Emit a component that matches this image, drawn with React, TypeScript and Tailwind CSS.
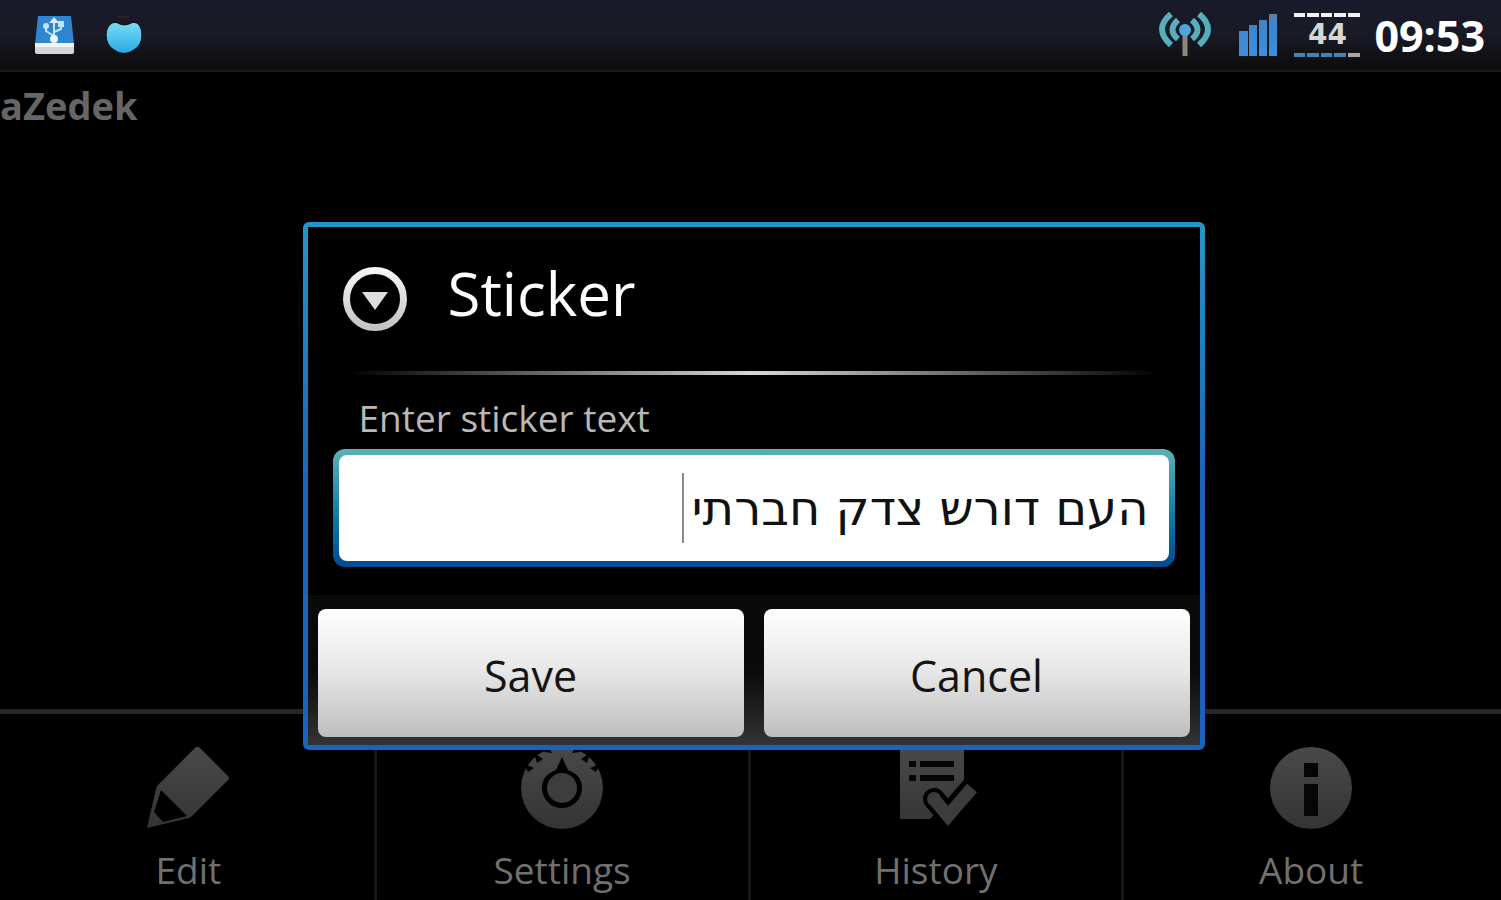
import type { ReactNode } from 'react';

function UsbDriveIcon() {
  return (
    <svg width="42" height="42" viewBox="0 0 42 42" aria-hidden="true">
      <path d="M4 2h33l3 28H1z" fill="#2f86cf" />
      <path d="M1 29h39v9q0 2-2 2H3q-2 0-2-2z" fill="#d6d6d6" />
      <path d="M1 29h39v4H1z" fill="#f4f4f4" />
      <g stroke="#c4e2fa" strokeWidth="2" fill="none">
        <path d="M20 6v20M20 22l-8-5v-5M20 18l7-3v-5" />
      </g>
      <path d="M20 3l5 6H15z" fill="#d8ecff" />
      <circle cx="20" cy="25" r="4" fill="#e8f6ff" />
      <circle cx="12" cy="12" r="3" fill="#c4e2fa" />
      <path d="M24 7h6v6h-6z" fill="#c4e2fa" />
    </svg>
  );
}

function FruitIcon() {
  return (
    <svg width="40" height="42" viewBox="0 0 40 42" aria-hidden="true">
      <defs>
        <linearGradient id="fruit" x1="0" y1="0" x2="0" y2="1">
          <stop offset="0" stopColor="#7adcf6" />
          <stop offset="1" stopColor="#25a9e0" />
        </linearGradient>
      </defs>
      <path d="M14 2q6 3 11 0" stroke="#33262a" strokeWidth="2" fill="none" />
      <path
        d="M8 9q4-2 8 1q4 2 9 0q4-3 8-1q5 4 5 12q0 10-8 15q-10 7-20 0q-8-5-8-15q0-8 6-12z"
        fill="url(#fruit)"
        stroke="#05080c"
        strokeWidth="1"
      />
    </svg>
  );
}

function AntennaIcon() {
  return (
    <svg width="54" height="46" viewBox="0 0 54 46" fill="none" aria-hidden="true">
      <g stroke="#57aebd" strokeWidth="6">
        <path d="M13 2q-18 15 0 31M41 2q18 15 0 31" />
        <path d="M20 8q-11 10 0 19M34 8q11 10 0 19" />
      </g>
      <path d="M27 20v24" stroke="#8a8680" strokeWidth="5" />
      <circle cx="27" cy="18" r="6" fill="#4aa8e0" />
    </svg>
  );
}

function SignalIcon() {
  return (
    <svg width="40" height="44" viewBox="0 0 40 44" aria-hidden="true">
      <defs>
        <linearGradient id="signal" x1="0" y1="0" x2="0" y2="44" gradientUnits="userSpaceOnUse">
          <stop offset="0" stopColor="#5f7f9c" />
          <stop offset="0.300" stopColor="#3b86d0" />
          <stop offset="1" stopColor="#3d8fe0" />
        </linearGradient>
      </defs>
      <path d="M1 18h9v25H1zM11 12h8v31h-8zM21 7h8v36h-8zM31 1h8v42h-8z" fill="url(#signal)" />
    </svg>
  );
}

function DashedLine({ color, last }: { color: string; last: string }) {
  return (
    <svg width="66" height="4" viewBox="0 0 66 4" aria-hidden="true">
      <path d="M0 0h11v4H0zM13 0h12v4H13zM27 0h11v4H27zM40 0h12v4H40z" fill={color} />
      <path d="M54 0h12v4H54z" fill={last} />
    </svg>
  );
}

function GlyphGradient({ id }: { id: string }) {
  return (
    <defs>
      <linearGradient id={id} x1="0" y1="0" x2="0" y2="84" gradientUnits="userSpaceOnUse">
        <stop offset="0" stopColor="#494949" />
        <stop offset="1" stopColor="#343434" />
      </linearGradient>
    </defs>
  );
}

function PencilIcon() {
  return (
    <svg width="84" height="84" viewBox="0 0 84 84" aria-hidden="true">
      <GlyphGradient id="pencil" />
      <path
        fillRule="evenodd"
        d="M50 1q2-1 4 1l28 28q2 2 0 4L46 70q-1 1-3 2L1 82l9-39q0-2 2-4zM15 44L8 66l9 10 24-6z"
        fill="url(#pencil)"
      />
    </svg>
  );
}

function DialIcon() {
  return (
    <svg width="84" height="84" viewBox="0 0 84 84" aria-hidden="true">
      <GlyphGradient id="dial" />
      <circle cx="42" cy="42" r="41" fill="url(#dial)" />
      <path d="M42 11l6 13q14 5 14 18a20 20 0 0 1-40 0q0-13 14-18z" fill="#000" />
      <circle cx="42" cy="42" r="15" fill="#3d3d3d" />
      <path
        d="M4 18l10 4-6 4zM14 7l9 6-6 4zM28 0l4 7-8-1zM40 0h4l-2 5zM56 0l-4 7 8-1zM70 7l-9 6 6 4zM80 18l-10 4 6 4z"
        fill="#000"
      />
    </svg>
  );
}

function ChecklistIcon() {
  return (
    <svg width="84" height="84" viewBox="0 0 84 84" aria-hidden="true">
      <GlyphGradient id="list" />
      <path d="M6 2h64v36L36 73H6z" fill="url(#list)" />
      <path d="M15 15h7v6h-7zM26 15h34v6H26zM15 29h7v6h-7zM26 29h34v6H26z" fill="#050505" />
      <path d="M40 53l14 16 26-30" stroke="#000" strokeWidth="22" strokeLinejoin="round" strokeLinecap="round" fill="none" />
      <path d="M39 52l15 18 24-28" stroke="#3c3c3c" strokeWidth="13" fill="none" />
      <circle cx="40" cy="53" r="7" fill="#3c3c3c" />
    </svg>
  );
}

function InfoIcon() {
  return (
    <svg width="84" height="84" viewBox="0 0 84 84" aria-hidden="true">
      <GlyphGradient id="info" />
      <circle cx="42" cy="42" r="41" fill="url(#info)" />
      <path d="M35 17h14v14H35zM35 38h14v32H35z" fill="#050505" />
    </svg>
  );
}

function MoreCircleIcon() {
  return (
    <svg width="66" height="66" viewBox="0 0 66 66" aria-hidden="true">
      <defs>
        <linearGradient id="ring" x1="0" y1="0" x2="0" y2="1">
          <stop offset="0" stopColor="#f5f5f5" />
          <stop offset="1" stopColor="#c4c4c4" />
        </linearGradient>
      </defs>
      <circle cx="33" cy="33" r="28.500" fill="none" stroke="url(#ring)" strokeWidth="7" />
      <path d="M20 26h26L33 44z" fill="#dedede" />
    </svg>
  );
}

const menuItems: { label: string; icon: ReactNode }[] = [
  { label: 'Edit', icon: <PencilIcon /> },
  { label: 'Settings', icon: <DialIcon /> },
  { label: 'History', icon: <ChecklistIcon /> },
  { label: 'About', icon: <InfoIcon /> },
];

const buttonClass =
  'h-32 flex-1 rounded-lg bg-linear-to-b from-white via-[#e6e6e6] to-[#bebebe] pt-1 text-[43px] leading-none text-[#141414]';

export default function App() {
  return (
    <div className="flex min-h-screen flex-col overflow-hidden bg-black font-['Open_Sans','Noto_Sans',sans-serif]">
      <header className="flex h-[72px] items-center justify-between border-b-2 border-[#1a1a1a] bg-linear-to-b from-[#181a2a] via-[#191a25] to-[#0b0b0c] pr-4 pl-[34px]">
        <div className="flex items-center gap-7">
          <UsbDriveIcon />
          <FruitIcon />
        </div>
        <div className="flex items-center">
          <AntennaIcon />
          <div className="ml-[26px]">
            <SignalIcon />
          </div>
          <div className="ml-4 flex h-11 flex-col items-center justify-between">
            <DashedLine color="#f2f2f2" last="#f2f2f2" />
            <span className="font-['DejaVu_Sans'] text-[28px] leading-6 font-bold text-[#d6d6d6]">44</span>
            <DashedLine color="#3f86b8" last="#a9a9a9" />
          </div>
          <time className="ml-[14px] text-[43px] leading-none font-bold text-white">09:53</time>
        </div>
      </header>

      <main className="relative flex flex-1 flex-col">
        <h1 className="flex-1 pt-2 text-[38px] leading-[50px] font-bold text-[#666]">aZedek</h1>

        <nav className="grid grid-cols-4 divide-x-3 divide-[#181818] border-t-5 border-[#272727] px-[3px]">
          {menuItems.map((item) => (
            <button key={item.label} type="button" className="flex h-[186px] flex-col items-center gap-4 pt-8 text-[#707070]">
              {item.icon}
              <span className="text-[37px] leading-12">{item.label}</span>
            </button>
          ))}
        </nav>

        <div className="absolute inset-0 flex items-center justify-center pl-[6px]">
          <form
            role="dialog"
            aria-labelledby="dialog-title"
            onSubmit={(event) => event.preventDefault()}
            className="w-[902px] max-w-full rounded-md bg-linear-to-b from-[#2597c4] via-[#1d63b8] to-[#1a62c0] p-[5px]"
          >
            <div className="bg-black">
              <div className="flex h-36 items-center gap-10 px-[34px]">
                <MoreCircleIcon />
                <h2 id="dialog-title" className="pb-3 text-[60px] leading-none text-white">
                  Sticker
                </h2>
              </div>
              <div className="mx-10 h-1 bg-linear-to-r from-transparent via-[#d8d8d8] to-transparent" />
              <div className="px-[25px] pt-4 pb-7">
                <label htmlFor="sticker-text" className="block pb-1 pl-[26px] text-[37px] leading-[54px] text-[#b8b8b8]">
                  Enter sticker text
                </label>
                <div className="relative rounded-xl bg-linear-to-b from-[#5ab2b6] via-[#1683a8] to-[#004a92] p-[6px]">
                  <input
                    id="sticker-text"
                    dir="rtl"
                    type="text"
                    defaultValue="העם דורש צדק חברתי"
                    className="block h-[106px] w-full rounded-lg bg-white px-5 font-['DejaVu_Sans',sans-serif] text-[48px] text-[#111] outline-none"
                  />
                  <span className="absolute top-6 right-[491px] h-[70px] w-[2px] bg-[#8a8a8a]" />
                </div>
              </div>
              <div className="flex gap-5 bg-linear-to-b from-[#0a0a0a] from-50% to-[#343432] px-[10px] pt-[14px] pb-2">
                <button type="submit" className={buttonClass}>
                  Save
                </button>
                <button type="button" className={buttonClass}>
                  Cancel
                </button>
              </div>
            </div>
          </form>
        </div>
      </main>
    </div>
  );
}
